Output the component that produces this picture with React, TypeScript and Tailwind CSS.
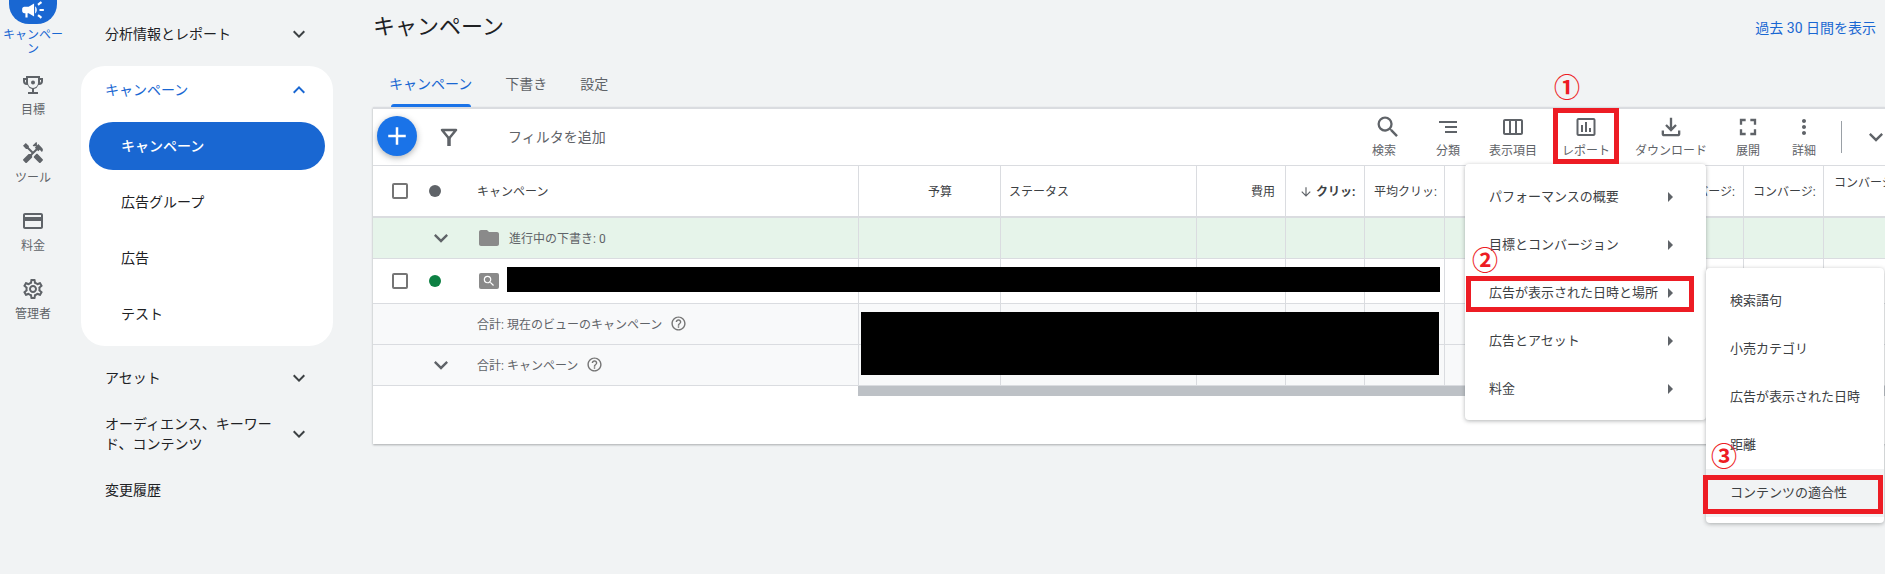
import {
  MdAdd,
  MdArrowDownward,
  MdArrowRight,
  MdCampaign,
  MdCreditCard,
  MdExpandLess,
  MdExpandMore,
  MdFolder,
  MdFullscreen,
  MdHandyman,
  MdHelpOutline,
  MdInsertChartOutlined,
  MdMoreVert,
  MdOutlineFileDownload,
  MdOutlineSettings,
  MdOutlineViewWeek,
  MdSearch,
} from "react-icons/md";

const COLUMNS =
  "grid grid-cols-[485px_142px_196px_89px_79px_80px_80px_80px_59px_80px_80px_1fr]";

function TrophyIcon() {
  return (
    <svg width="24" height="24" viewBox="0 0 24 24" fill="currentColor">
      <path
        fillRule="evenodd"
        d="M5 3h14v2h3v3a4 4 0 0 1-4 4h-.5A6 6 0 0 1 13 15.9V19h4v2H7v-2h4v-3.1A6 6 0 0 1 6.500 12H6a4 4 0 0 1-4-4V5h3V3zm2 2v5a5 5 0 0 0 10 0V5zM4 7v1a2 2 0 0 0 1 1.700V7zm16 0h-1v2.700A2 2 0 0 0 20 8z"
      />
      <circle cx="12" cy="9.500" r="2" />
    </svg>
  );
}

function SortIcon() {
  return (
    <svg width="24" height="24" viewBox="0 0 24 24" fill="currentColor">
      <rect x="3" y="6" width="18" height="2" />
      <rect x="9" y="11" width="12" height="2" />
      <rect x="9" y="16" width="12" height="2" />
    </svg>
  );
}

function FilterIcon() {
  return (
    <svg width="24" height="24" viewBox="0 0 24 24" fill="none" stroke="#5f6368">
      <path d="M5 5h14l-7 8.500z" strokeWidth="2.500" strokeLinejoin="round" />
      <path d="M12 12v9" strokeWidth="3.500" />
    </svg>
  );
}

function RailItem({ icon, label }: { icon: React.ReactNode; label: string }) {
  return (
    <div className="flex flex-col items-center text-[#5f6368]">
      {icon}
      <span className="mt-[6px] text-xs leading-[14px]">{label}</span>
    </div>
  );
}

function NavRow({ label, open }: { label: string; open?: boolean }) {
  return (
    <div className="flex h-14 w-[252px] items-center justify-between pl-6 pr-[22px] text-sm leading-5 text-[#202124]">
      <span className="w-[172px]">{label}</span>
      {open !== undefined && <MdExpandMore size={24} className="text-[#3c4043]" />}
    </div>
  );
}

function Tool({
  icon,
  label,
  width,
}: {
  icon: React.ReactNode;
  label: string;
  width: string;
}) {
  return (
    <div className={`flex flex-col items-center pt-[6px] text-[#5f6368] ${width}`}>
      {icon}
      <span className="mt-1 text-xs leading-4">{label}</span>
    </div>
  );
}

// one table row: first cell holds the content, the others are only column lines
function Row({
  className,
  children,
}: {
  className: string;
  children: React.ReactNode;
}) {
  return (
    <div className={`${COLUMNS} border-b border-[#dadce0] ${className}`}>
      <div className="flex items-center text-xs text-[#5f6368]">{children}</div>
      {Array.from({ length: 11 }).map((_, i) => (
        <div key={i} className="border-l border-[#dadce0]" />
      ))}
    </div>
  );
}

function HeaderCell({
  className,
  children,
}: {
  className?: string;
  children?: React.ReactNode;
}) {
  return (
    <div
      className={`flex items-center overflow-hidden whitespace-nowrap border-l border-[#dadce0] pt-[2px] text-xs text-[#3c4043] ${className ?? ""}`}
    >
      {children}
    </div>
  );
}

function Checkbox() {
  return <div className="h-4 w-4 rounded-[2px] border-2 border-[#757575]" />;
}

function MenuItem({
  label,
  arrow,
  active,
}: {
  label: string;
  arrow?: boolean;
  active?: boolean;
}) {
  return (
    <div
      className={`flex h-12 items-center justify-between pl-6 pr-6 text-[13px] text-[#3c4043] ${active ? "bg-[#f1f3f4]" : ""}`}
    >
      <span className="whitespace-nowrap">{label}</span>
      {arrow && <MdArrowRight size={24} className="shrink-0 text-[#5f6368]" />}
    </div>
  );
}

export default function App() {
  return (
    <div className="flex h-screen overflow-hidden bg-[#f1f3f4] font-['Roboto','Noto_Sans_CJK_JP',sans-serif]">
      {/* Icon Rail */}
      <div className="flex w-[66px] shrink-0 flex-col items-center gap-6">
        <div className="-mb-[7px] -mt-1 flex flex-col items-center">
          <div className="flex h-[28px] w-12 items-center justify-center rounded-b-[20px] bg-[#1967d2] text-white">
            <MdCampaign size={26} />
          </div>
          <span className="mt-1 w-[62px] text-center text-xs leading-[14px] text-[#1967d2]">
            キャンペーン
          </span>
        </div>
        <RailItem icon={<TrophyIcon />} label="目標" />
        <RailItem icon={<MdHandyman size={24} />} label="ツール" />
        <RailItem icon={<MdCreditCard size={24} />} label="料金" />
        <RailItem icon={<MdOutlineSettings size={24} />} label="管理者" />
      </div>

      {/* Section Nav */}
      <div className="w-[307px] shrink-0 pl-[15px] pt-[6px]">
        <NavRow label="分析情報とレポート" open={false} />
        <div className="my-1 flex w-[252px] flex-col rounded-3xl bg-white pb-2">
          <div className="flex h-12 items-center justify-between pl-6 pr-[22px] text-sm text-[#1967d2]">
            <span>キャンペーン</span>
            <MdExpandLess size={24} />
          </div>
          <div className="mx-2 mt-2 flex h-12 items-center rounded-full bg-[#1967d2] pl-8 text-sm font-medium text-white">
            キャンペーン
          </div>
          <div className="mx-2 mt-2 flex h-12 items-center pl-8 text-sm text-[#202124]">
            広告グループ
          </div>
          <div className="mx-2 mt-2 flex h-12 items-center pl-8 text-sm text-[#202124]">
            広告
          </div>
          <div className="mx-2 mt-2 flex h-12 items-center pl-8 text-sm text-[#202124]">
            テスト
          </div>
        </div>
        <NavRow label="アセット" open={false} />
        <NavRow label="オーディエンス、キーワード、コンテンツ" open={false} />
        <NavRow label="変更履歴" />
      </div>

      {/* Main */}
      <div className="relative min-w-0 flex-1">
        <div className="flex h-[52px] items-center justify-between pr-[9px]">
          <h1 className="text-[22px] font-normal text-[#202124]">キャンペーン</h1>
          <span className="mt-1 text-sm text-[#1967d2]">過去 30 日間を表示</span>
        </div>

        {/* Tabs */}
        <div className="ml-4 flex h-[55px] gap-[33px] text-sm text-[#5f6368]">
          <div className="flex flex-col justify-end">
            <span className="mb-[10px] leading-5 text-[#1967d2]">キャンペーン</span>
            <div className="mx-auto h-[3px] w-20 rounded-t-sm bg-[#1a73e8]" />
          </div>
          <div className="flex flex-col justify-end">
            <span className="mb-[13px] leading-5">下書き</span>
          </div>
          <div className="flex flex-col justify-end">
            <span className="mb-[13px] leading-5">設定</span>
          </div>
        </div>

        {/* Table Card */}
        <div className="h-[337px] border-t-2 border-[#dadce0] bg-white shadow-[0_1px_2px_rgba(60,64,67,0.4)]">
          {/* Toolbar */}
          <div className="flex h-[57px] border-b border-[#dadce0]">
            <div className="ml-1 mt-[7px] flex h-10 w-10 items-center justify-center rounded-full bg-[#1a73e8] text-white shadow-[0_2px_6px_rgba(60,64,67,0.4)]">
              <MdAdd size={30} />
            </div>
            <div className="ml-5 mt-4">
              <FilterIcon />
            </div>
            <span className="ml-[47px] mt-[18px] text-sm leading-5 text-[#5f6368]">
              フィルタを追加
            </span>
            <div className="ml-auto flex">
              <Tool icon={<MdSearch size={28} className="-mt-0.5 -mb-0.5 ml-2" />} label="検索" width="w-[60px]" />
              <Tool icon={<SortIcon />} label="分類" width="w-[68px]" />
              <Tool icon={<MdOutlineViewWeek size={24} />} label="表示項目" width="w-[62px]" />
              <Tool icon={<MdInsertChartOutlined size={24} />} label="レポート" width="w-[84px]" />
              <Tool icon={<MdOutlineFileDownload size={28} className="-mt-0.5 -mb-0.5" />} label="ダウンロード" width="w-[86px]" />
              <Tool icon={<MdFullscreen size={28} className="-mt-0.5 -mb-0.5" />} label="展開" width="w-[68px]" />
              <Tool icon={<MdMoreVert size={24} />} label="詳細" width="w-[44px]" />
              <div className="ml-[15px] mt-3 h-8 w-px bg-[#9aa0a6]" />
              <MdExpandMore size={28} className="-mr-[5px] ml-[20px] mt-[14px] text-[#5f6368]" />
            </div>
          </div>

          {/* Table Header */}
          <div className={`${COLUMNS} h-[52px] border-b-2 border-[#dadce0]`}>
            <div className="flex items-center pl-[19px] text-xs text-[#3c4043]">
              <Checkbox />
              <div className="ml-[21px] h-3 w-3 rounded-full bg-[#5f6368]" />
              <span className="ml-9 pt-[2px]">キャンペーン</span>
            </div>
            <HeaderCell className="justify-end pr-12">予算</HeaderCell>
            <HeaderCell className="pl-2">ステータス</HeaderCell>
            <HeaderCell className="justify-end pr-[10px]">費用</HeaderCell>
            <HeaderCell className="pl-[13px]">
              <MdArrowDownward size={14} className="mr-[3px] shrink-0 text-[#5f6368]" />
              <span className="font-bold">クリッ:</span>
            </HeaderCell>
            <HeaderCell className="pl-[9px]">平均クリッ:</HeaderCell>
            <HeaderCell />
            <HeaderCell />
            <HeaderCell />
            <HeaderCell className="justify-end pr-2">コンバージ:</HeaderCell>
            <HeaderCell className="pl-[9px]">コンバージ:</HeaderCell>
            <HeaderCell className="items-start pl-[10px] pt-[9px]">コンバージョン</HeaderCell>
          </div>

          {/* Rows */}
          <Row className="h-[41px] bg-[#e6f4ea]">
            <MdExpandMore size={28} className="ml-[54px] text-[#5f6368]" />
            <MdFolder size={24} className="ml-[22px] text-[#8a8a8a]" />
            <span className="ml-2 pt-[2px]">進行中の下書き: 0</span>
          </Row>
          <Row className="h-[45px]">
            <div className="ml-[19px]">
              <Checkbox />
            </div>
            <div className="ml-[21px] h-3 w-3 rounded-full bg-[#0d8043]" />
            <div className="ml-[38px] flex h-4 w-5 items-center justify-center rounded-[2px] bg-[#8a8a8a] text-white">
              <MdSearch size={14} />
            </div>
          </Row>
          <Row className="h-[41px] bg-[#f8f9fa]">
            <span className="ml-[104px] pt-[2px]">合計: 現在のビューのキャンペーン</span>
            <MdHelpOutline size={17} className="-mt-px ml-2 text-[#757575]" />
          </Row>
          <Row className="h-[41px] bg-[#f8f9fa]">
            <MdExpandMore size={28} className="ml-[54px] text-[#5f6368]" />
            <span className="ml-[22px] pt-[2px]">合計: キャンペーン</span>
            <MdHelpOutline size={17} className="-mt-px ml-2 text-[#757575]" />
          </Row>

          {/* Scrollbar */}
          <div className="ml-[485px] h-[10px] bg-[#bdc1c6]" />
        </div>

        {/* Redactions */}
        <div className="absolute left-[134px] top-[267px] h-[25px] w-[933px] bg-black" />
        <div className="absolute left-[488px] top-[312px] h-[63px] w-[578px] bg-black" />

        {/* Report Menu */}
        <div className="absolute left-[1092px] top-[164px] h-[256px] w-[241px] rounded-[4px] bg-white pt-[9px] shadow-[0_1px_4px_rgba(60,64,67,0.4)]">
          <MenuItem label="パフォーマンスの概要" arrow />
          <MenuItem label="目標とコンバージョン" arrow />
          <MenuItem label="広告が表示された日時と場所" arrow />
          <MenuItem label="広告とアセット" arrow />
          <MenuItem label="料金" arrow />
        </div>

        {/* Sub Menu */}
        <div className="absolute left-[1333px] top-[268px] h-[255px] w-[178px] rounded-[4px] bg-white pt-[9px] shadow-[0_1px_4px_rgba(60,64,67,0.4)]">
          <MenuItem label="検索語句" />
          <MenuItem label="小売カテゴリ" />
          <MenuItem label="広告が表示された日時" />
          <MenuItem label="距離" />
          <MenuItem label="コンテンツの適合性" active />
        </div>

        {/* Red Annotations */}
        <div className="absolute left-[1180px] top-[108px] h-[56px] w-[66px] border-[5px] border-[#ed1c24]" />
        <div className="absolute left-[1093px] top-[276px] h-[36px] w-[228px] border-[5px] border-[#ed1c24]" />
        <div className="absolute left-[1330px] top-[475px] h-[39px] w-[180px] border-[5px] border-[#ed1c24]" />
        <span className="absolute left-[1181px] top-[70px] text-[26px] font-bold leading-9 text-[#ed1c24]">①</span>
        <span className="absolute left-[1099px] top-[243px] text-[26px] font-bold leading-9 text-[#ed1c24]">②</span>
        <span className="absolute left-[1338px] top-[439px] text-[26px] font-bold leading-9 text-[#ed1c24]">③</span>
      </div>
    </div>
  );
}
